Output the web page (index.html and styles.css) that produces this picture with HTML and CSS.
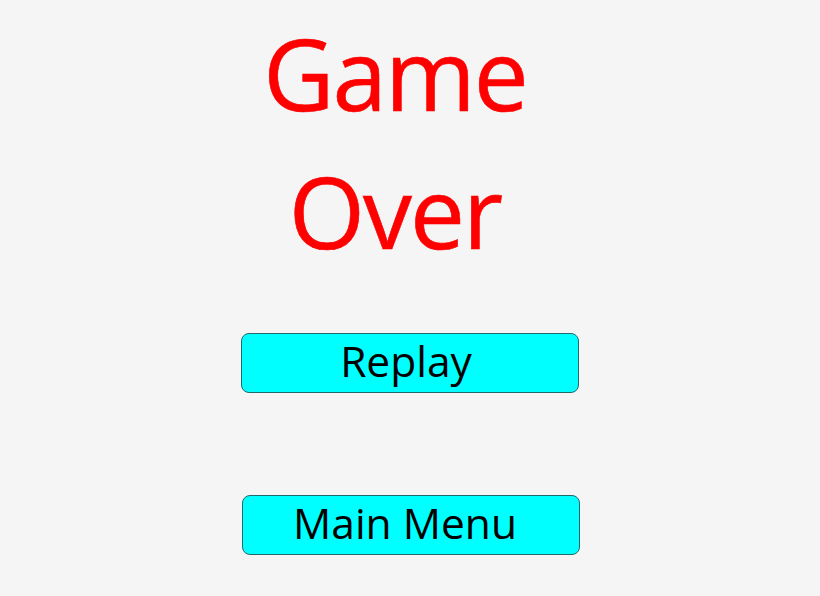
FILE: index.html
```html
<!DOCTYPE html>
<html lang="en">
<head>
<meta charset="utf-8">
<title>Game Over</title>
<link rel="stylesheet" href="styles.css">
</head>
<body>
<main class="screen">
  <h1 class="title">Game<br>Over</h1>
  <div class="actions">
    <button class="btn btn-replay" type="button">Replay</button>
    <button class="btn btn-menu" type="button">Main Menu</button>
  </div>
</main>
</body>
</html>
```
FILE: styles.css
```css
html, body {
  margin: 0;
  padding: 0;
  background: #f5f5f5;
}

.screen {
  width: 820px;
  height: 596px;
  display: flex;
  flex-direction: column;
  align-items: center;
  font-family: "Open Sans", "Liberation Sans", sans-serif;
}

.title {
  margin: 4px 0 0 -30px;
  font-size: 98px;
  font-weight: 400;
  line-height: 138px;
  color: #ff0000;
  text-align: center;
  letter-spacing: -2px;
  -webkit-text-stroke: 0.6px #ff0000;
}

.actions {
  display: flex;
  flex-direction: column;
  gap: 102px;
  margin-top: 53px;
  margin-left: 1px;
}

.btn {
  width: 338px;
  height: 60px;
  background: #00ffff;
  border: 1px solid #24696a;
  border-radius: 8px;
  font-family: inherit;
  font-size: 42.5px;
  color: #000;
  padding: 0 8px 4px 0;
  line-height: 1;
}

.btn-menu {
  margin-left: 1px;
  padding-right: 12px;
}
```
